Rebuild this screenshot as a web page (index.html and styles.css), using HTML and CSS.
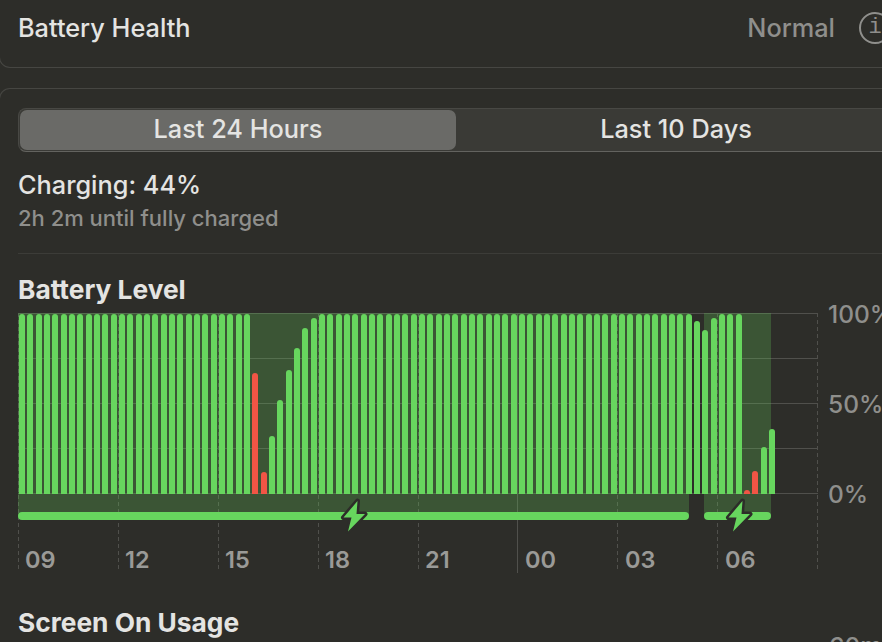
FILE: index.html
```html
<!DOCTYPE html>
<html lang="en">
<head>
    <meta charset="UTF-8">
    <meta name="viewport" content="width=device-width, initial-scale=1.0">
    <title>Battery</title>
    <link rel="stylesheet" href="styles.css">
</head>
<body>
    <div class="card health-card">
        <span class="health-title">Battery Health</span>
        <span class="health-value">Normal</span>
        <span class="info-icon">i</span>
    </div>

    <div class="card usage-card">
        <div class="segments">
            <div class="segment selected">Last 24 Hours</div>
            <div class="segment">Last 10 Days</div>
        </div>

        <div class="status">
            <div class="status-main">Charging: 44%</div>
            <div class="status-sub">2h 2m until fully charged</div>
        </div>

        <h3 class="section-title">Battery Level</h3>
        <div class="chart-row">
            <div class="chart">
                <div class="grid-v">
                    <i></i><i></i><i></i><i></i><i></i><i class="solid"></i><i></i><i></i><i></i>
                </div>
                <div class="grid-h">
                    <i></i><i></i><i></i><i></i><i></i>
                </div>
                <div class="regions">
                    <div class="region region-long"><div class="charge-bar"></div></div>
                    <div class="region region-short"><div class="charge-bar"></div></div>
                </div>
                <div class="bars">
                    <b></b><b></b><b></b><b></b><b></b><b></b><b></b><b></b><b></b><b></b>
                    <b></b><b></b><b></b><b></b><b></b><b></b><b></b><b></b><b></b><b></b>
                    <b></b><b></b><b></b><b></b><b></b><b></b><b></b><b></b>
                    <b class="low" style="height: 121px"></b>
                    <b class="low" style="height: 22px"></b>
                    <b style="height: 58px"></b>
                    <b style="height: 94px"></b>
                    <b style="height: 124px"></b>
                    <b style="height: 146px"></b>
                    <b style="height: 166px"></b>
                    <b style="height: 176px"></b>
                    <b></b><b></b><b></b><b></b><b></b><b></b><b></b><b></b><b></b><b></b>
                    <b></b><b></b><b></b><b></b><b></b><b></b><b></b><b></b><b></b><b></b>
                    <b></b><b></b><b></b><b></b><b></b><b></b><b></b><b></b><b></b><b></b>
                    <b></b><b></b><b></b><b></b><b></b><b></b><b></b><b></b><b></b><b></b>
                    <b></b><b></b><b></b><b></b><b></b>
                    <b style="height: 173px"></b>
                    <b style="height: 164px"></b>
                    <b style="height: 176px"></b>
                    <b></b><b></b><b></b>
                    <b class="low" style="height: 4px"></b>
                    <b class="low" style="height: 23px"></b>
                    <b style="height: 47px"></b>
                    <b style="height: 65px"></b>
                </div>
                <svg class="bolt bolt-one" viewBox="0 0 30 40"><path d="M19.500 5 5.500 21.500h8L10 35.500 27 18h-8.500z"/></svg>
                <svg class="bolt bolt-two" viewBox="0 0 30 40"><path d="M19.500 5 5.500 21.500h8L10 35.500 27 18h-8.500z"/></svg>
                <div class="hours">
                    <span>09</span><span>12</span><span>15</span><span>18</span><span>21</span><span>00</span><span>03</span><span>06</span>
                </div>
            </div>
            <div class="axis">
                <span>100%</span>
                <span>50%</span>
                <span>0%</span>
            </div>
        </div>

        <div class="usage-row">
            <h3 class="section-title">Screen On Usage</h3>
            <span class="usage-tick">60m</span>
        </div>
    </div>
</body>
</html>
```

FILE: styles.css
```css
html, body {
    margin: 0;
    height: 642px;
    overflow: hidden;
}
body {
    background-color: #2d2d29;
    color: #e4e4e2;
    font-family: Inter, "Liberation Sans", sans-serif;
    font-size: 25.3px;
    font-weight: 450;
}
.card {
    width: 920px;
    margin-left: -1px;
    box-sizing: border-box;
    border: 1px solid #464642;
    border-radius: 11px;
    padding-left: 18px;
}
.health-card {
    display: flex;
    align-items: center;
    height: 68px;
    padding-bottom: 12px;
    border-top: none;
    border-top-left-radius: 0;
    border-top-right-radius: 0;
}
.health-value {
    margin-left: auto;
    color: #8f8f8c;
}
.info-icon {
    width: 28px;
    height: 28px;
    margin-left: 24px;
    margin-right: 27px;
    border: 2px solid #8f8f8c;
    border-radius: 50%;
    color: #8f8f8c;
    font-family: "Liberation Mono", monospace;
    font-size: 22px;
    line-height: 28px;
    text-align: center;
}
.usage-card {
    margin-top: 20px;
    padding-top: 19px;
    border-bottom: none;
}
.segments {
    display: flex;
    height: 44px;
    box-sizing: border-box;
    padding: 1px;
    background-color: #3a3a36;
    border-top: 1px solid #484844;
    border-bottom: 1px solid #63635f;
    border-left: 1px solid #484844;
    border-radius: 8px;
}
.segment {
    width: 440px;
    line-height: 38px;
    text-align: center;
}
.segment.selected {
    width: 436px;
    box-sizing: border-box;
    background-color: #6a6a67;
    border-radius: 7px;
}
.status {
    width: 864px;
    height: 102px;
    padding-top: 18px;
    box-sizing: border-box;
    border-bottom: 1px solid #3c3c38;
}
.status-main {
    line-height: 29px;
}
.status-sub {
    margin-top: 7px;
    color: #8f8f8c;
    font-size: 22px;
    line-height: 25px;
}
.section-title {
    margin: 0;
    font-size: 26.3px;
    font-weight: 650;
    line-height: 30px;
}
.status + .section-title {
    margin-top: 21px;
}
.chart-row {
    display: flex;
    margin-top: 8px;
}
.chart {
    position: relative;
    width: 800px;
    height: 261px;
}
.grid-v {
    position: absolute;
    inset: 0 0 4px 0;
    display: flex;
    justify-content: space-between;
}
.grid-v i {
    width: 1px;
    background-image: repeating-linear-gradient(#50504c 0 4px, transparent 4px 7px);
}
.grid-v i.solid {
    margin-bottom: -3px;
    background-image: none;
    background-color: #50504c;
}
.grid-h {
    position: absolute;
    top: 0;
    left: 0;
    right: 0;
    height: 181px;
    display: flex;
    flex-direction: column;
    justify-content: space-between;
}
.grid-h i {
    height: 1px;
    background-color: #50504c;
}
.regions {
    position: absolute;
    top: 0;
    left: 0;
    display: flex;
    gap: 15px;
}
.region {
    height: 203px;
    display: flex;
    align-items: flex-end;
    background-color: rgba(103, 214, 94, 0.24);
}
.region-long {
    width: 671px;
}
.region-short {
    width: 67px;
}
.charge-bar {
    width: 100%;
    height: 8px;
    margin-bottom: -4px;
    border-radius: 4px;
    background-color: #67d65e;
}
.bars {
    position: absolute;
    top: 1px;
    left: 0;
    width: 800px;
    height: 180px;
    display: grid;
    grid-template-columns: repeat(96, 1fr);
    align-items: end;
}
.bars b {
    justify-self: center;
    width: 6px;
    height: 180px;
    border-radius: 3px 3px 0 0;
    background-color: #67d65e;
}
.bars b.low {
    background-color: #f15545;
}
.bolt {
    position: absolute;
    top: 183px;
    width: 30px;
    height: 40px;
}
.bolt path {
    fill: #67d65e;
    stroke: #2d2d29;
    stroke-width: 5px;
    stroke-linejoin: round;
    paint-order: stroke;
}
.bolt-one {
    left: 320px;
}
.bolt-two {
    left: 705px;
}
.hours {
    position: absolute;
    top: 232px;
    left: 0;
    display: flex;
    color: #9a9a97;
    font-size: 23.5px;
    font-weight: 600;
    line-height: 29px;
}
.hours span {
    width: 93px;
    padding-left: 7px;
}
.axis {
    display: flex;
    flex-direction: column;
    justify-content: space-between;
    height: 208px;
    margin-top: -13px;
    margin-left: 10px;
    color: #8f8f8c;
    font-size: 24.5px;
    line-height: 28px;
}
.usage-row {
    display: flex;
    align-items: flex-start;
    margin-top: 34px;
    height: 60px;
}
.usage-tick {
    margin-left: 590px;
    margin-top: 24px;
    color: #8f8f8c;
    font-size: 24.5px;
    line-height: 28px;
}
```
